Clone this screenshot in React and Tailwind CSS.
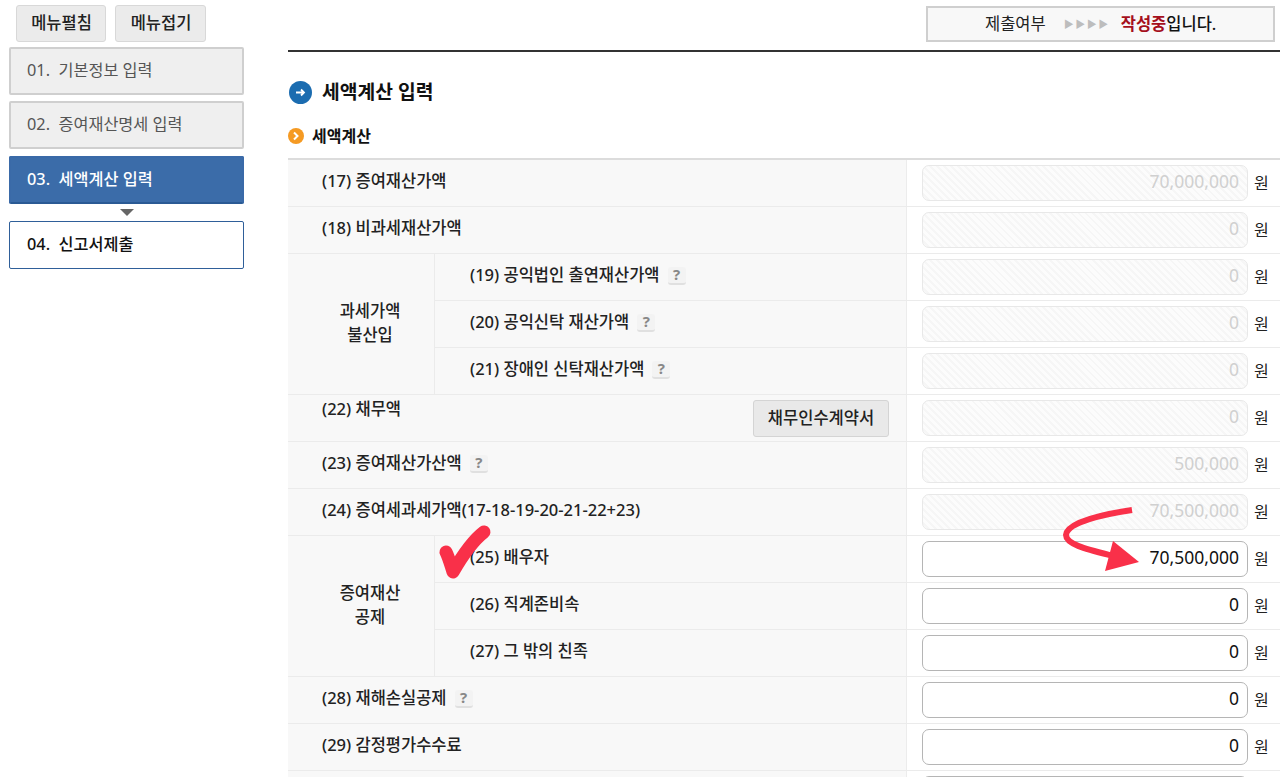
const font = { fontFamily: '"Noto Sans", "Noto Sans CJK KR", sans-serif' };

function Help() {
  return (
    <span className="ml-[8px] inline-flex h-[18px] w-[18px] items-center justify-center rounded-[3px] border-b-2 border-[#e0e0e0] bg-[#f3f3f3] text-[15px] font-bold leading-none text-[#888]">
      ?
    </span>
  );
}

function Amount({ value, editable }) {
  return (
    <div className="flex h-full items-center border-l border-[#ececec] bg-white pl-[15px]">
      {editable ? (
        <div className="flex h-[36px] w-[326px] items-center justify-end rounded-[7px] border border-[#b5b5b5] bg-white pb-[3px] pr-[8px] text-[17.5px] text-[#111]">
          {value}
        </div>
      ) : (
        <div className="flex h-[36px] w-[326px] items-center justify-end rounded-[7px] border border-[#e8e8e8] bg-[repeating-linear-gradient(45deg,#fcfcfc_0px,#fcfcfc_3px,#f6f6f6_3px,#f6f6f6_5px)] pb-[3px] pr-[8px] text-[17.5px] text-[#d0d0d0]">
          {value}
        </div>
      )}
      {value && <span className="ml-[6px] pb-[1px] text-[16px] text-[#222]">원</span>}
    </div>
  );
}

function Row({ label, help, value, editable, button, inset, high }) {
  return (
    <div className="flex h-[47px] border-b border-[#ebebeb]">
      <div
        className={
          inset
            ? "flex w-[471px] items-center justify-between bg-[#f8f8f8] pl-[35px] pr-[17px]"
            : "flex w-[618px] items-center justify-between bg-[#f8f8f8] pl-[34px] pr-[17px]"
        }
      >
        <span
          className={
            high
              ? "mb-[18px] flex items-center text-[16.5px] font-medium text-[#222]"
              : "mb-[3px] flex items-center text-[16.5px] font-medium text-[#222]"
          }
        >
          {label}
          {help && <Help />}
        </span>
        {button && (
          <button className="h-[37px] w-[136px] rounded-[3px] border border-[#d4d4d4] bg-[#e9e9e9] text-[16.5px] font-medium text-[#222]">
            {button}
          </button>
        )}
      </div>
      <div className="flex-1">
        <Amount value={value} editable={editable} />
      </div>
    </div>
  );
}

function Group({ title, rows }) {
  return (
    <div className="flex">
      <div className="flex w-[147px] items-center justify-center border-r border-b border-[#ebebeb] bg-[#f8f8f8] pl-[18px] pb-[3px] text-center text-[16.5px] font-medium leading-[24px] text-[#222]">
        <span>
          {title[0]}
          <br />
          {title[1]}
        </span>
      </div>
      <div className="flex-1">
        {rows.map((r) => (
          <Row key={r.label} inset {...r} />
        ))}
      </div>
    </div>
  );
}

const steps = [
  { text: "01.  기본정보 입력", cls: "mb-[6px] border-[#cfcfcf] bg-[#efefef] text-[#555]" },
  { text: "02.  증여재산명세 입력", cls: "mb-[7px] border-[#cfcfcf] bg-[#efefef] text-[#555]" },
  { text: "03.  세액계산 입력", cls: "mb-[6px] border-[#3a6aa8] border-b-[#2a5a94] bg-[#3b6ca9] font-medium text-white" },
];

export default function App() {
  return (
    <div className="relative flex h-[777px] overflow-hidden bg-white" style={font}>
      <aside className="w-[288px] shrink-0">
        <div className="flex gap-[9px] pl-[16px] pt-[5px]">
          <button className="h-[37px] w-[90px] rounded-[3px] border border-[#d8d8d8] bg-[#ebebeb] pl-[1px] text-[16.5px] font-medium text-[#222]">
            메뉴펼침
          </button>
          <button className="h-[37px] w-[91px] rounded-[3px] border border-[#d8d8d8] bg-[#ebebeb] pl-[1px] text-[16.5px] font-medium text-[#222]">
            메뉴접기
          </button>
        </div>
        <div className="ml-[9px] mt-[5px] w-[235px]">
          {steps.map((s) => (
            <div
              key={s.text}
              className={`flex h-[48px] items-center whitespace-pre rounded-[2px] border-2 pb-[2px] pl-[16px] text-[16.3px] ${s.cls}`}
            >
              {s.text}
            </div>
          ))}
          <div className="mx-auto mb-[5px] mt-[-1px] h-0 w-0 border-x-[7px] border-t-[7px] border-x-transparent border-t-[#666]" />
          <div className="flex h-[48px] items-center whitespace-pre rounded-[2px] border-[1.5px] border-[#2f5f99] bg-white pb-[2px] pl-[17px] text-[16.3px] font-medium text-[#111]">
            {"04.  신고서제출"}
          </div>
        </div>
      </aside>

      <main className="flex-1">
        <div className="flex h-[52px] justify-end border-b-[2px] border-[#333] pr-[5px] pt-[6px]">
          <div className="flex h-[36px] w-[349px] items-center border-2 border-[#cfcfcf] bg-[#f8f8f8] pl-[57px] text-[16.5px] text-[#222]">
            제출여부
            <span className="ml-[18px] text-[10px] tracking-[1.5px] text-[#bdbdbd]">▶▶▶▶</span>
            <span className="ml-[11px] font-bold text-[#a5101c]">작성중</span>
            <span className="font-medium text-[#111]">입니다.</span>
          </div>
        </div>

        <h2 className="mt-[28px] flex h-[24px] items-center text-[19.3px] font-bold text-[#111]">
          <svg width="23" height="23" viewBox="0 0 23 23" className="mr-[10px] ml-[1px]">
            <circle cx="11.5" cy="11.5" r="11.5" fill="#1b6cb0" />
            <path d="M7 11.5h8M12 8.5l3 3-3 3" stroke="#fff" strokeWidth="1.8" fill="none" />
          </svg>
          세액계산 입력
        </h2>

        <h3 className="mt-[20px] flex h-[24px] items-center text-[16px] font-bold text-[#111]">
          <svg width="16" height="16" viewBox="0 0 16 16" className="mr-[8px]">
            <circle cx="8" cy="8" r="8" fill="#f59a23" />
            <path d="M6 4.5L9.5 8 6 11.5" stroke="#fff" strokeWidth="2" fill="none" />
          </svg>
          세액계산
        </h3>

        <div className="mt-[10px] border-t-2 border-[#dcdcdc]">
          <Row label="(17) 증여재산가액" value="70,000,000" />
          <Row label="(18) 비과세재산가액" value="0" />
          <Group
            title={["과세가액", "불산입"]}
            rows={[
              { label: "(19) 공익법인 출연재산가액", value: "0", help: true },
              { label: "(20) 공익신탁 재산가액", value: "0", help: true },
              { label: "(21) 장애인 신탁재산가액", value: "0", help: true },
            ]}
          />
          <Row label="(22) 채무액" value="0" button="채무인수계약서" high />
          <Row label="(23) 증여재산가산액" value="500,000" help />
          <Row label="(24) 증여세과세가액(17-18-19-20-21-22+23)" value="70,500,000" />
          <Group
            title={["증여재산", "공제"]}
            rows={[
              { label: "(25) 배우자", value: "70,500,000", editable: true },
              { label: "(26) 직계존비속", value: "0", editable: true },
              { label: "(27) 그 밖의 친족", value: "0", editable: true },
            ]}
          />
          <Row label="(28) 재해손실공제" value="0" editable help />
          <Row label="(29) 감정평가수수료" value="0" editable />
          <Row label="" value="" editable />
        </div>
      </main>

      {/* annotations drawn over the screenshot */}
      <svg className="absolute left-[436px] top-[520px]" width="60" height="66" viewBox="0 0 60 66">
        <path d="M10 32C13 38 15 46 17 52C25 38 35 22 48 12" stroke="#f93049" strokeWidth="13" strokeLinecap="round" strokeLinejoin="round" fill="none" />
      </svg>
      <svg className="absolute left-[1055px] top-[500px]" width="100" height="75" viewBox="0 0 100 75">
        <path d="M77 10C50 14 12 22 11 35C11 45 35 50 62 57" stroke="#f93049" strokeWidth="6" fill="none" />
        <path d="M58 41L84 62L50 71Z" fill="#f93049" />
      </svg>
    </div>
  );
}
